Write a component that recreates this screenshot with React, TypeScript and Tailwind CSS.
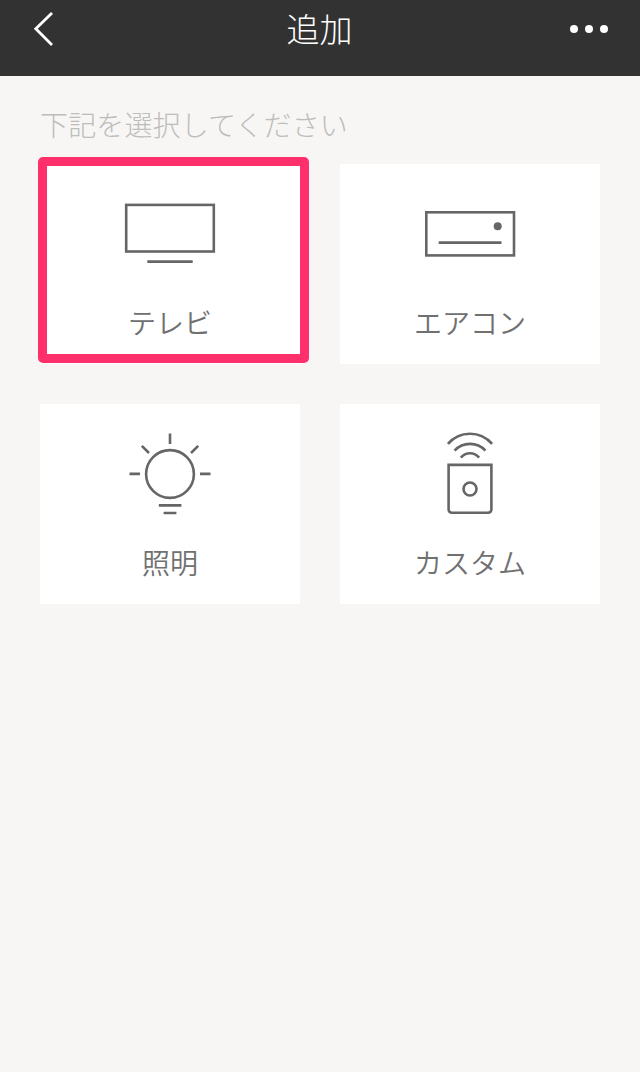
import type { ReactNode } from "react";

function Icon({ children }: { children: ReactNode }) {
  return (
    <svg
      viewBox="0 0 120 120"
      className="h-[120px] w-[120px] shrink-0"
      fill="none"
      stroke="#666666"
      strokeWidth="2.6"
      aria-hidden="true"
    >
      {children}
    </svg>
  );
}

function TvIcon() {
  return (
    <Icon>
      <rect x="16.2" y="40.9" width="87.6" height="46.6" />
      <path d="M37.3 97.6H82.7" />
    </Icon>
  );
}

function AirConditionerIcon() {
  return (
    <Icon>
      <rect x="16.3" y="48.3" width="87.7" height="43.1" />
      <path d="M28.7 78.6H91.5" />
      <circle cx="87.7" cy="62.2" r="4" fill="#666666" stroke="none" />
    </Icon>
  );
}

function LightIcon() {
  return (
    <Icon>
      <circle cx="60" cy="70" r="23.9" />
      <path d="M60 29.5V40M19.5 69.9H30M90 69.9H100.5M31.8 41.8L39 49M88.2 41.8L81 49M48.8 101.4H71.4M53.6 109H66.4" />
    </Icon>
  );
}

function CustomIcon() {
  return (
    <Icon>
      <path d="M38.6 60.9H81.4V105.3Q81.4 108.8 77.9 108.8H42.1Q38.6 108.8 38.6 105.3Z" />
      <circle cx="60" cy="85" r="6.5" />
      <path d="M37.9 39.9A29 29 0 0 1 82.1 39.9M44.6 46.6A21 21 0 0 1 75.4 46.6M50.9 53.6A11.8 11.8 0 0 1 69.1 53.6" />
    </Icon>
  );
}

function DeviceCard({
  label,
  icon,
  selected = false,
}: {
  label: string;
  icon: ReactNode;
  selected?: boolean;
}) {
  return (
    <button
      type="button"
      className="relative flex h-[200px] flex-col items-center bg-white text-[28px] leading-10 font-[350] text-[#707070]"
    >
      {icon}
      <span className="mt-[18px]">{label}</span>
      {selected && (
        <span className="absolute -top-[7px] -left-[2px] h-[206px] w-[271px] rounded-[5px] border-[9px] border-[#ff2f6c]" />
      )}
    </button>
  );
}

export default function App() {
  return (
    <div className="min-h-[1072px] bg-[#f7f6f4] font-['Noto_Sans_CJK_JP',sans-serif] font-light">
      <header className="flex h-[76px] items-start justify-between bg-[#323232] px-8 text-white">
        <button type="button" aria-label="戻る" className="flex h-[58px] w-10 items-center">
          <svg viewBox="0 0 24 36" className="h-9 w-6" fill="none" stroke="currentColor" strokeWidth="2.8">
            <path d="M20 2L3.8 17.8L20 34" />
          </svg>
        </button>
        <h1 className="pr-px text-[33px] leading-[56px]">追加</h1>
        <button type="button" aria-label="メニュー" className="flex h-[58px] w-10 items-center justify-end gap-[7px]">
          <span className="size-2 shrink-0 rounded-full bg-white" />
          <span className="size-2 shrink-0 rounded-full bg-white" />
          <span className="size-2 shrink-0 rounded-full bg-white" />
        </button>
      </header>
      <main className="px-10 pt-7">
        <p className="text-[28px] leading-10 tracking-[0.15px] text-[#bdbdbb]">下記を選択してください</p>
        <div className="mt-5 grid grid-cols-2 gap-10">
          <DeviceCard label="テレビ" icon={<TvIcon />} selected />
          <DeviceCard label="エアコン" icon={<AirConditionerIcon />} />
          <DeviceCard label="照明" icon={<LightIcon />} />
          <DeviceCard label="カスタム" icon={<CustomIcon />} />
        </div>
      </main>
    </div>
  );
}
